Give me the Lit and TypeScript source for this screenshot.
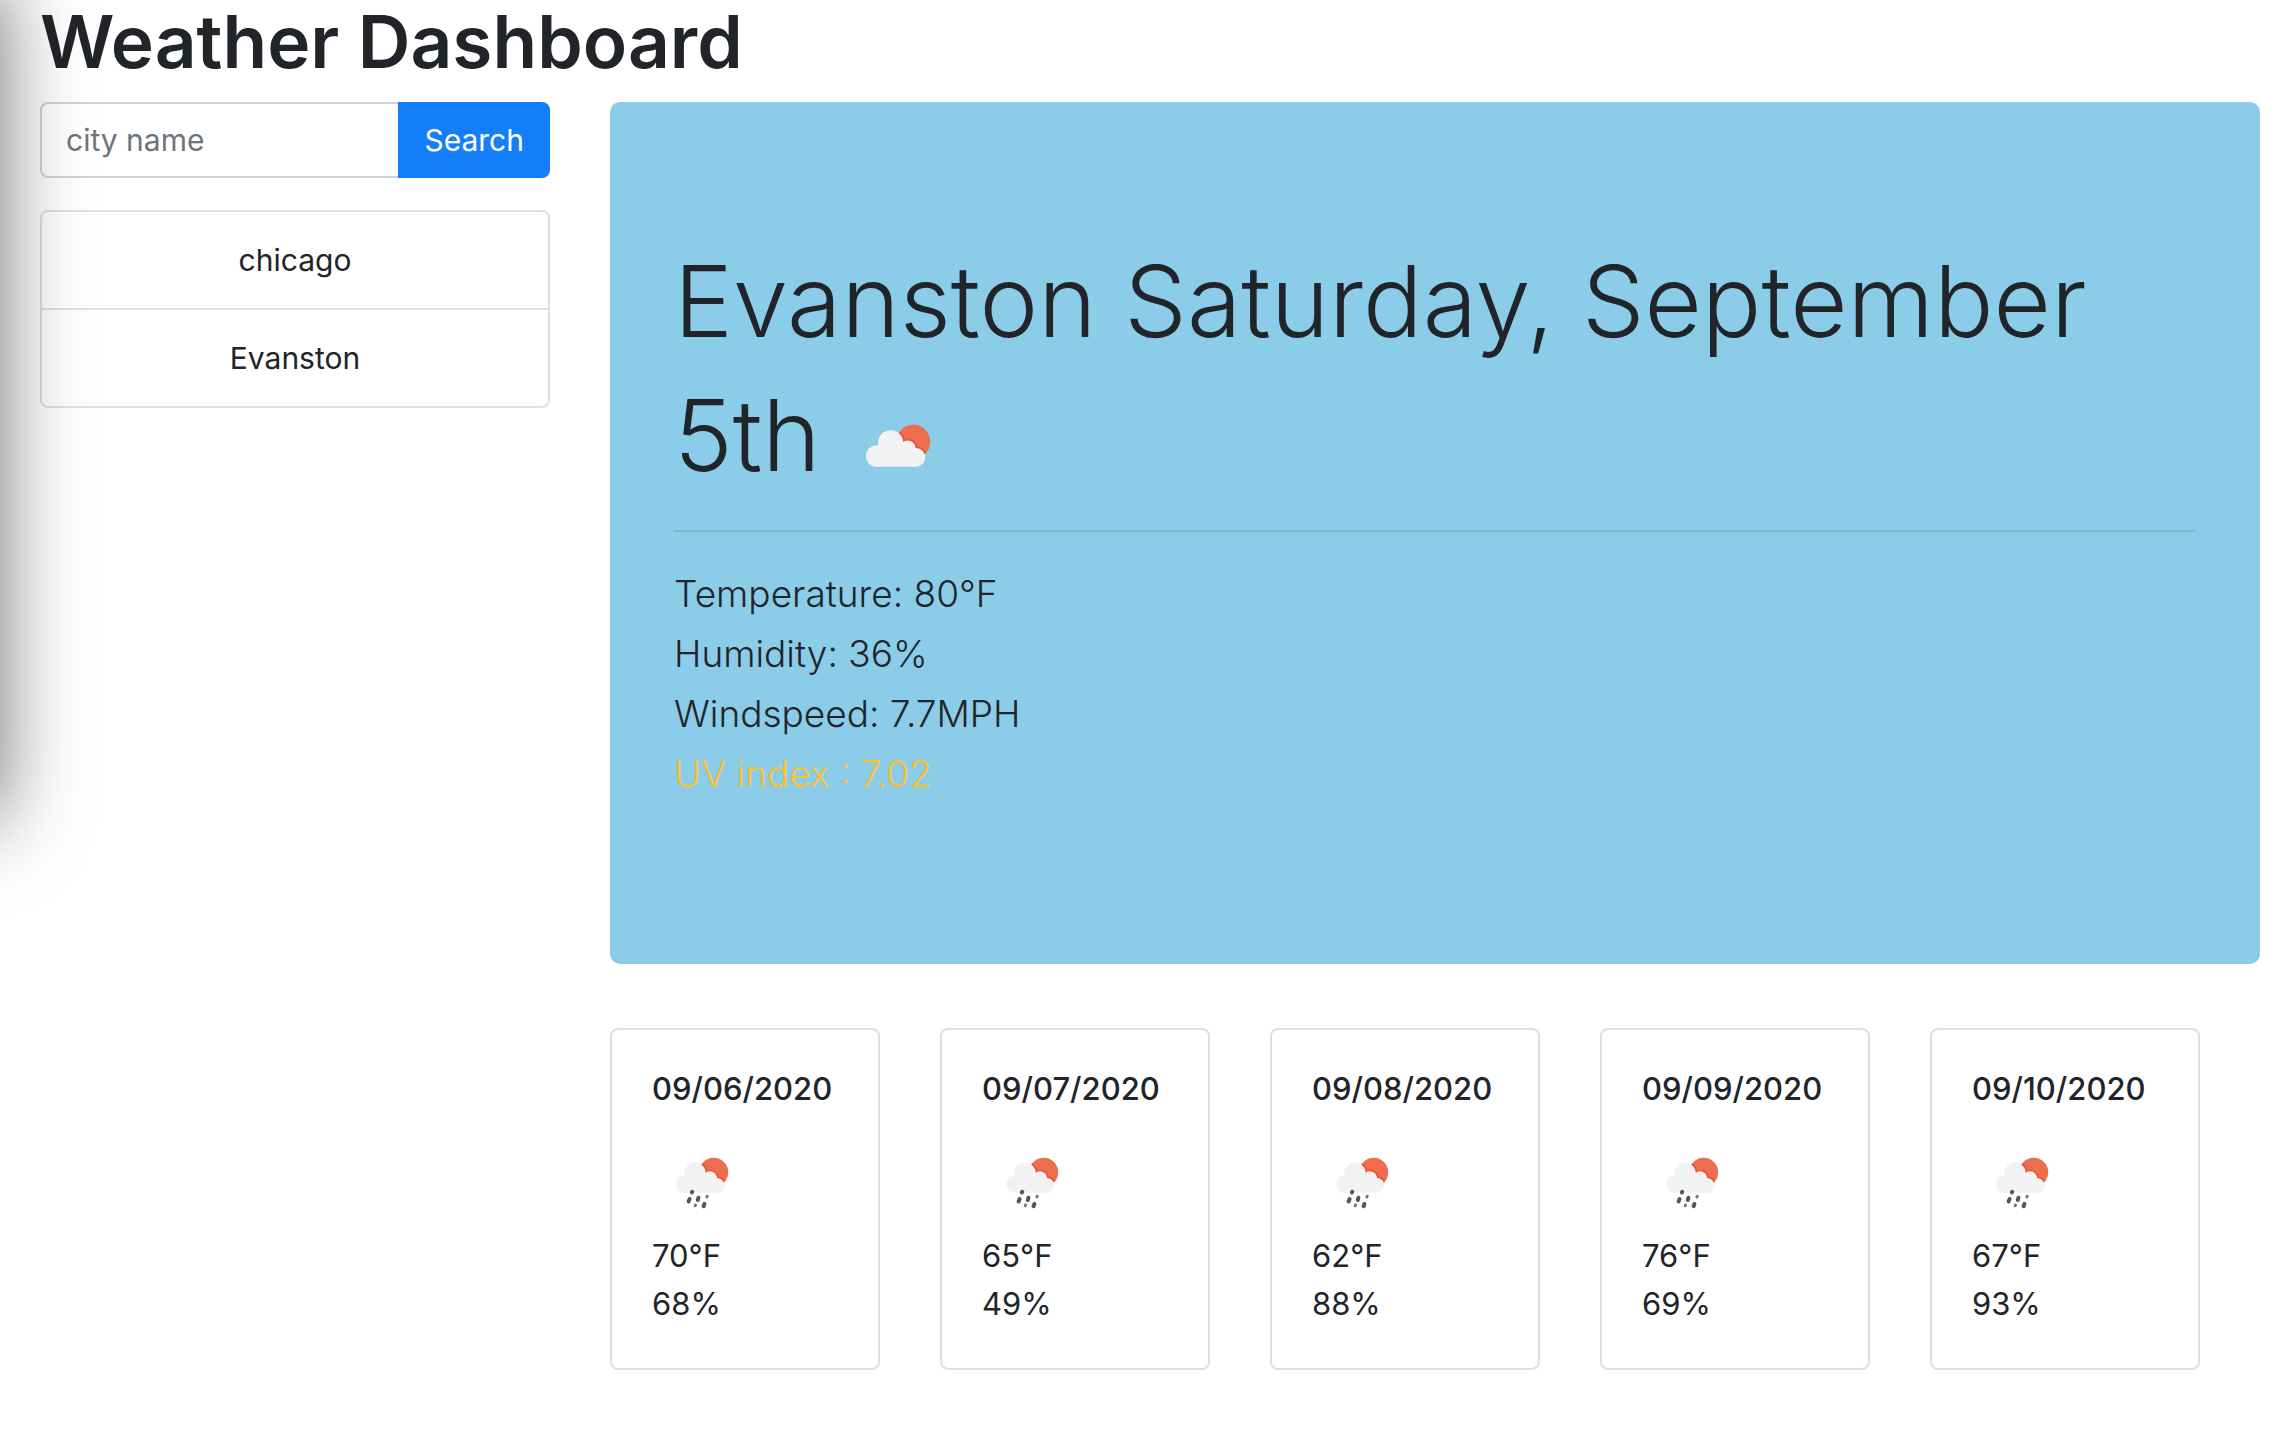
import { LitElement, html, css, svg } from "lit";
import { customElement, property, state } from "lit/decorators.js";

interface Forecast {
  date: string;
  temperature: string;
  humidity: string;
}

type Condition = "cloudy" | "rain";

@customElement("weather-icon")
class WeatherIcon extends LitElement {
  @property() condition: Condition = "cloudy";

  static styles = css`
    :host {
      display: inline-block;
      width: 100px;
      height: 100px;
      vertical-align: middle;
    }
    .icon {
      display: block;
      width: 100%;
      height: 100%;
    }
    .sun { fill: #eb6e4f; }
    .shade { fill: #ec4f33; }
    .cloud { fill: #f2f2f2; }
    .drop { stroke: #555; stroke-linecap: round; stroke-width: 4; }
    .drop.small { stroke-width: 3; stroke: #777; }
  `;

  private cloudy() {
    const lobes = svg`
      <circle cx="28.8" cy="62" r="10.8" />
      <circle cx="42.7" cy="49" r="12.7" />
      <circle cx="59.8" cy="54.5" r="8" />
      <circle cx="68" cy="63.4" r="9.3" />
      <path d="M28.8 51 H60 L68 72.7 H28.8 Z" />`;
    return svg`
      <clipPath id="sun"><circle cx="65.3" cy="47.7" r="17" /></clipPath>
      <circle class="sun" cx="65.3" cy="47.7" r="17" />
      <g clip-path="url(#sun)"><g class="shade" transform="translate(1.4 -1.2)">${lobes}</g></g>
      <g class="cloud">${lobes}</g>`;
  }

  private rain() {
    const lobes = svg`
      <circle cx="33" cy="52" r="8.8" />
      <circle cx="43" cy="41.5" r="10.8" />
      <circle cx="58" cy="46.3" r="7" />
      <circle cx="65" cy="53.4" r="7.4" />
      <path d="M33 44 H58 L65 60.8 H33 Z" />`;
    return svg`
      <clipPath id="sun"><circle cx="61.7" cy="40.2" r="14.5" /></clipPath>
      <circle class="sun" cx="61.7" cy="40.2" r="14.5" />
      <g clip-path="url(#sun)"><g class="shade" transform="translate(1.4 -1.2)">${lobes}</g></g>
      <g class="cloud">${lobes}</g>
      <path class="drop" d="M40.2 59.8 L39.9 60.4 M37.6 67 L36.6 69.4 M46.4 65.8 L45.8 68 M52.4 72 L51.6 74.2" />
      <path class="drop small" d="M55.2 64.2 L54.9 65 M43.5 73 L43.2 73.8" />`;
  }

  render() {
    return html`<svg class="icon" viewBox="0 0 100 100" role="img" aria-label=${this.condition}>
      ${this.condition === "rain" ? this.rain() : this.cloudy()}
    </svg>`;
  }
}

@customElement("forecast-card")
class ForecastCard extends LitElement {
  @property({ attribute: false }) day!: Forecast;

  static styles = css`
    :host {
      display: block;
      box-sizing: border-box;
      padding: 40px;
      border: 2px solid #dfdfdf;
      border-radius: 8px;
      background: #fff;
    }
    .date {
      margin: 0 0 24px;
      font-size: 31px;
      font-weight: 500;
      line-height: 38px;
      white-space: nowrap;
    }
    weather-icon { display: block; }
    .reading {
      margin: 0;
      font-size: 31px;
      line-height: 48px;
    }
  `;

  render() {
    return html`
      <h5 class="date">${this.day.date}</h5>
      <weather-icon condition="rain"></weather-icon>
      <p class="reading">${this.day.temperature}</p>
      <p class="reading">${this.day.humidity}</p>
    `;
  }
}

@customElement("app-root")
class AppRoot extends LitElement {
  @state() private cities = ["chicago", "Evanston"];

  private forecast: Forecast[] = [
    { date: "09/06/2020", temperature: "70°F", humidity: "68%" },
    { date: "09/07/2020", temperature: "65°F", humidity: "49%" },
    { date: "09/08/2020", temperature: "62°F", humidity: "88%" },
    { date: "09/09/2020", temperature: "76°F", humidity: "69%" },
    { date: "09/10/2020", temperature: "67°F", humidity: "93%" },
  ];

  static styles = css`
    :host {
      display: block;
      position: relative;
      box-sizing: border-box;
      min-height: 100vh;
      padding: 0 36px 70px 40px;
      overflow: hidden;
      background: #fff;
      color: #212529;
      font-family: Inter, "Liberation Sans", sans-serif;
      font-size: 30px;
      line-height: 48px;
    }
    .edge-shadow {
      position: absolute;
      top: -20px;
      right: 100%;
      width: 200px;
      height: 840px;
      box-shadow: 0 0 84px rgba(0, 0, 0, 0.56);
      pointer-events: none;
    }
    .title {
      margin: 0;
      padding-bottom: 18px;
      font-size: 73px;
      font-weight: 600;
      line-height: 84px;
    }
    .layout {
      display: grid;
      grid-template-columns: minmax(0, 510fr) minmax(0, 1650fr);
      gap: 60px;
      align-items: start;
    }
    .search { display: flex; }
    .city {
      flex: 1;
      min-width: 0;
      box-sizing: border-box;
      height: 76px;
      padding: 12px 24px;
      border: 2px solid #ced4da;
      border-right: 0;
      border-radius: 8px 0 0 8px;
      background: transparent;
      color: inherit;
      font: inherit;
    }
    .city::placeholder { color: #6c757d; opacity: 1; }
    .submit {
      height: 76px;
      padding: 12px 24px;
      border: 2px solid #157efb;
      border-radius: 0 8px 8px 0;
      background: #157efb;
      color: #fff;
      font: inherit;
      line-height: 48px;
    }
    .history {
      margin: 32px 0 0;
      padding: 0;
      list-style: none;
      border: 2px solid #dfdfdf;
      border-radius: 8px;
    }
    .entry { text-align: center; padding: 24px; }
    .entry + .entry { border-top: 2px solid #dfdfdf; }
    .current {
      padding: 132px 64px 160px;
      border-radius: 10px;
      background: #8bcde9;
    }
    .place {
      margin: 0;
      font-size: 99px;
      font-weight: 300;
      line-height: 134px;
    }
    .rule {
      margin: 28px 0 32px;
      border: 0;
      border-top: 2px solid rgba(0, 0, 0, 0.1);
    }
    .lead {
      margin: 0;
      font-size: 37px;
      font-weight: 300;
      line-height: 60px;
    }
    .uv { color: #fdc030; }
    .days {
      display: grid;
      grid-template-columns: repeat(5, minmax(0, 1fr));
      gap: 60px;
      margin-top: 64px;
      padding-right: 60px;
    }
  `;

  private search(e: Event) {
    e.preventDefault();
    const input = (e.target as HTMLFormElement).elements.namedItem("city") as HTMLInputElement;
    const name = input.value.trim();
    if (name) this.cities = [...this.cities, name];
    input.value = "";
  }

  render() {
    return html`
      <h1 class="title">Weather Dashboard</h1>
      <div class="layout">
        <aside>
          <form class="search" @submit=${this.search}>
            <input class="city" name="city" type="text" placeholder="city name" aria-label="city name" />
            <button class="submit" type="submit">Search</button>
          </form>
          <ul class="history">
            ${this.cities.map((city) => html`<li class="entry">${city}</li>`)}
          </ul>
        </aside>
        <main>
          <section class="current">
            <h2 class="place">Evanston Saturday, September 5th <weather-icon condition="cloudy"></weather-icon></h2>
            <hr class="rule" />
            <p class="lead">Temperature: 80°F</p>
            <p class="lead">Humidity: 36%</p>
            <p class="lead">Windspeed: 7.7MPH</p>
            <p class="lead uv">UV index : 7.02</p>
          </section>
          <section class="days">
            ${this.forecast.map((day) => html`<forecast-card .day=${day}></forecast-card>`)}
          </section>
        </main>
      </div>
      <div class="edge-shadow"></div>
    `;
  }
}
